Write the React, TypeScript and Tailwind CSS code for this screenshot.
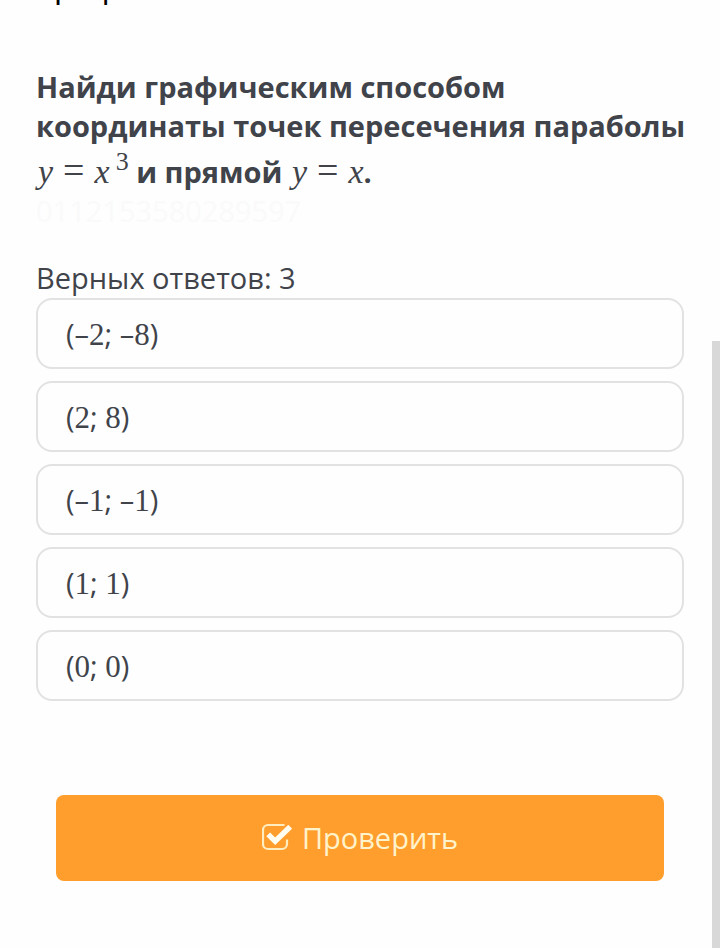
import type { ReactNode } from "react";

function MathText({ children }: { children: ReactNode }) {
  return (
    <span className="pl-0.5 font-['Liberation_Serif',serif] text-[34px] font-normal">
      {children}
    </span>
  );
}

function Equals() {
  return <span className="mx-[10px] text-[38px] leading-none">=</span>;
}

function Num({ children }: { children: ReactNode }) {
  return <span className="font-['Liberation_Serif',serif] text-[31px]">{children}</span>;
}

const answers = [
  { x: 2, y: 8, negative: true },
  { x: 2, y: 8, negative: false },
  { x: 1, y: 1, negative: true },
  { x: 1, y: 1, negative: false },
  { x: 0, y: 0, negative: false },
];

function Answer({ x, y, negative }: { x: number; y: number; negative: boolean }) {
  const sign = negative ? "–" : "";
  return (
    <label className="flex h-[71px] cursor-pointer items-center rounded-2xl border-2 border-[#e2e2e2] px-7 pt-1 text-[29px]">
      <input type="checkbox" name="answer" className="sr-only" />
      <span>
        ({sign}
        <Num>{x}</Num>; {sign}
        <Num>{y}</Num>)
      </span>
    </label>
  );
}

function CheckIcon() {
  return (
    <svg className="size-8" viewBox="0 0 32 32" fill="none" aria-hidden="true">
      <path
        d="M22.5 3H6a5 5 0 0 0-5 5v14a5 5 0 0 0 5 5h14a5 5 0 0 0 5-5v-4.5"
        stroke="#ffedc0"
        strokeWidth="2.2"
      />
      <path d="M6.2 12.3L13.2 19.3L28.2 4.8" stroke="#fffdf0" strokeWidth="5.4" />
    </svg>
  );
}

export default function App() {
  return (
    <div className="relative min-h-screen bg-[#fefefe] font-['Open_Sans','Noto_Sans',sans-serif] text-[#40434a]">
      <header className="flex h-2 items-end overflow-hidden px-9">
        <h1 className="text-[34px] leading-12 text-black">График</h1>
      </header>
      <main className="px-9 pt-[59px]">
        <h2 className="-mr-3 text-[29px] leading-[39px] font-bold">
          Найди графическим способом координаты точек пересечения параболы
          <span className="block pt-1.5 leading-[41px]">
            <MathText>
              <i>y</i>
              <Equals />
              <i>x</i>
              <sup className="ml-1.5 text-[26px] leading-none">3</sup>
            </MathText>{" "}
            и прямой{" "}
            <MathText>
              <i>y</i>
              <Equals />
              <i>x</i>
            </MathText>
            .
          </span>
        </h2>
        <p className="text-[29px] leading-[37px] text-[#fafafa]">0112153580289597</p>
        <fieldset className="pt-7" aria-label="Варианты ответа">
          <p className="text-[29px] leading-[41px]">Верных ответов: 3</p>
          <div className="flex flex-col gap-3">
            {answers.map((a, i) => (
              <Answer key={i} {...a} />
            ))}
          </div>
        </fieldset>
        <div className="px-5 pt-[94px] pb-16">
          <button
            type="button"
            className="flex h-[86px] w-full items-center justify-center gap-2 rounded-lg bg-[#ff9e2c] text-[29px] text-[#fff3cc]"
          >
            <CheckIcon />
            Проверить
          </button>
        </div>
      </main>
      <div className="absolute top-[341px] right-0 bottom-0 w-2 bg-[#d8d8d8]" />
    </div>
  );
}
